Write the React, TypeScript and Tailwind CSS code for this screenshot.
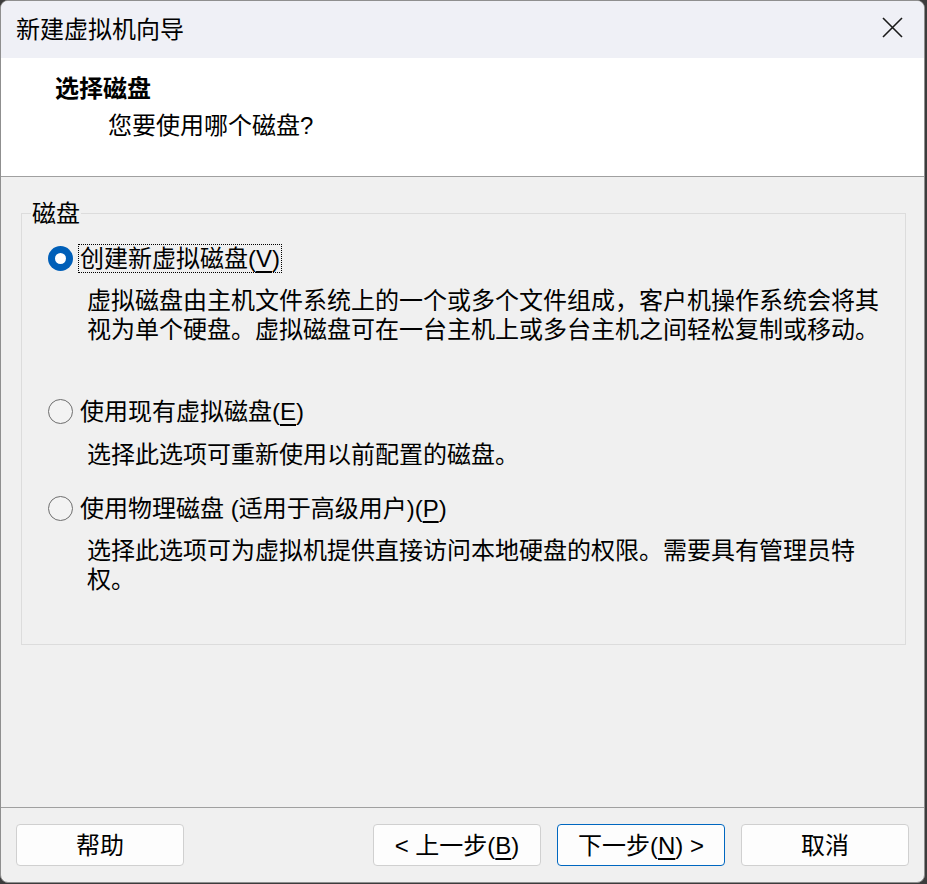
import React from "react";

const FONT = { fontFamily: '"Liberation Sans", "Noto Sans CJK SC", sans-serif' };

function Radio({ checked }: { checked?: boolean }) {
  if (checked) {
    return (
      <span className="flex h-[25px] w-[25px] shrink-0 items-center justify-center rounded-full bg-[#005fb8]">
        <span className="h-[11px] w-[11px] rounded-full bg-white" />
      </span>
    );
  }
  return <span className="h-[25px] w-[25px] shrink-0 rounded-full border-[1.5px] border-[#6e6e6e] bg-[#f3f3f3]" />;
}

function U({ children }: { children: React.ReactNode }) {
  return <span className="underline decoration-[1.5px] underline-offset-[4px]">{children}</span>;
}

function Btn({ children, primary }: { children: React.ReactNode; primary?: boolean }) {
  return (
    <button
      className={
        "flex h-[42px] w-[168px] items-center justify-center rounded-[4px] border bg-[#fdfdfd] text-[24px] leading-[29px] text-black " +
        (primary ? "border-[#0067c0]" : "border-[#d0d0d0]")
      }
    >
      {children}
    </button>
  );
}

export default function App() {
  return (
    <div className="h-[884px] w-[927px] overflow-hidden bg-[#3c3c3c]" style={FONT}>
      <div className="flex h-[883px] w-[925px] flex-col overflow-hidden rounded-[8px] border border-[#8f8f8f] bg-[#f0f0f0]">
        {/* title bar */}
        <div className="flex h-[57px] shrink-0 items-center justify-between bg-[#eff0f6] pl-[15px] pr-[21px]">
          <span className="text-[24px] leading-[29px] text-black">新建虚拟机向导</span>
          <svg width="21" height="21" viewBox="0 0 21 21" className="mt-[-4px]">
            <path d="M1 1 L20 20 M20 1 L1 20" stroke="#1a1a1a" strokeWidth="1.6" fill="none" />
          </svg>
        </div>
        {/* header */}
        <div className="h-[119px] shrink-0 border-b border-[#a0a0a0] bg-white pl-[54px] pt-[16px]">
          <div className="text-[24px] font-bold leading-[29px] text-black">选择磁盘</div>
          <div className="mt-[8px] pl-[53px] text-[24px] leading-[29px] text-black">您要使用哪个磁盘?</div>
        </div>
        {/* body */}
        <div className="flex-1 pl-[20px] pt-[22px]">
          <fieldset className="h-[446px] w-[885px] border border-[#dcdcdc]">
            <legend className="ml-[9px] px-[1px] text-[24px] leading-[29px] text-black">磁盘</legend>
            <div className="pt-[16px] text-[24px] leading-[29px] text-black">
              <div className="flex items-center pl-[26px]">
                <Radio checked />
                <span className="ml-[5px] border border-dotted border-black px-[1px] leading-[27px]">
                  创建新虚拟磁盘(<U>V</U>)
                </span>
              </div>
              <div className="ml-[65px] mt-[13px]">
                虚拟磁盘由主机文件系统上的一个或多个文件组成，客户机操作系统会将其
                <br />
                视为单个硬盘。虚拟磁盘可在一台主机上或多台主机之间轻松复制或移动。
              </div>
              <div className="mt-[53px] flex items-center pl-[26px]">
                <Radio />
                <span className="ml-[5px] border border-transparent px-[1px] leading-[27px]">
                  使用现有虚拟磁盘(<U>E</U>)
                </span>
              </div>
              <div className="ml-[65px] mt-[14px]">选择此选项可重新使用以前配置的磁盘。</div>
              <div className="mt-[25px] flex items-center pl-[26px]">
                <Radio />
                <span className="ml-[5px] border border-transparent px-[1px] leading-[27px]">
                  使用物理磁盘 (适用于高级用户)(<U>P</U>)
                </span>
              </div>
              <div className="ml-[65px] mt-[13px]">
                选择此选项可为虚拟机提供直接访问本地硬盘的权限。需要具有管理员特
                <br />
                权。
              </div>
            </div>
          </fieldset>
        </div>
        {/* footer */}
        <div className="flex h-[75px] shrink-0 items-start justify-between border-t border-[#a0a0a0] pl-[15px] pr-[15px] pt-[16px]">
          <Btn>帮助</Btn>
          <div className="flex gap-[16px]">
            <Btn>
              &lt; 上一步(<U>B</U>)
            </Btn>
            <Btn primary>
              下一步(<U>N</U>) &gt;
            </Btn>
            <Btn>取消</Btn>
          </div>
        </div>
      </div>
    </div>
  );
}
